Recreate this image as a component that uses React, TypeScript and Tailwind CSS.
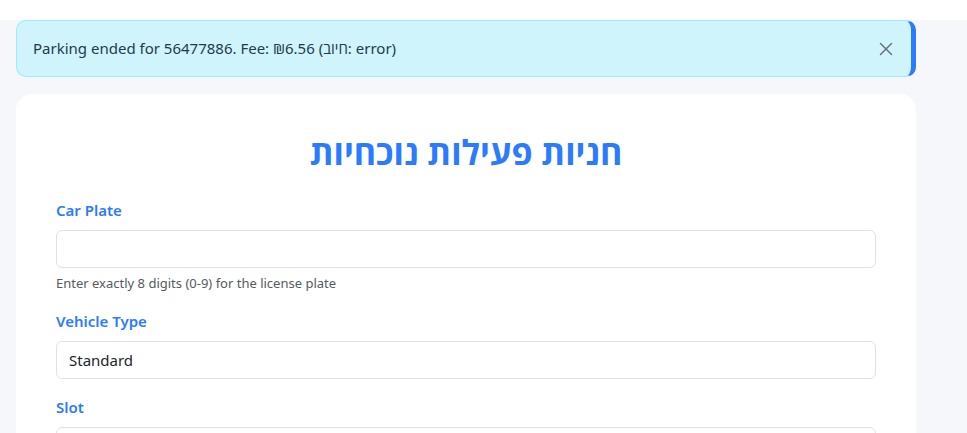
import { X } from 'lucide-react';

const FONT = { fontFamily: '"Noto Sans", "Open Sans", "DejaVu Sans", sans-serif' };

export default function App() {
  return (
    <div className="min-h-screen bg-white pt-5" style={FONT}>
      <div className="min-h-[413px] bg-[#f6f7fb] px-4">
        <div className="w-[900px]">
          <div className="flex h-[57px] items-center justify-between rounded-[10px] border border-[#9eeaf9] border-r-[5px] border-r-[#2b7bff] bg-[#cff4fc] pl-4 pr-[14px] text-[15px] text-[#1f3b4d]">
            <span>Parking ended for 56477886. Fee: ₪6.56 (חיוב: error)</span>
            <X className="size-[22px] text-[#6b7378]" strokeWidth={1.6} />
          </div>

          <section className="mt-[17px] rounded-2xl bg-white px-10 pt-[37px]">
            <h1 dir="rtl" className="text-center text-[34px] font-bold leading-[42px] text-[#2b7bff]">
              חניות פעילות נוכחיות
            </h1>

            <div className="mt-[27px]">
              <Field label="Car Plate">
                <div className="h-[38px] rounded-md border border-[#dee2e6] bg-white" />
                <p className="mt-[6px] text-[13px] leading-[18px] text-[#555b61]">
                  Enter exactly 8 digits (0-9) for the license plate
                </p>
              </Field>
              <div className="mt-[19px]">
                <Field label="Vehicle Type">
                  <div className="flex h-[38px] items-center rounded-md border border-[#dee2e6] bg-white px-3 text-[15px] text-[#212529]">
                    Standard
                  </div>
                </Field>
              </div>
              <div className="mt-[18px]">
                <Field label="Slot">
                  <div className="h-[38px] rounded-md border border-[#dee2e6] bg-white" />
                </Field>
              </div>
            </div>
          </section>
        </div>
      </div>
    </div>
  );
}

function Field({ label, children }: { label: string; children: React.ReactNode }) {
  return (
    <div>
      <label className="mb-[10px] block text-[15px] font-semibold leading-[20px] text-[#2b7bff]">{label}</label>
      {children}
    </div>
  );
}
